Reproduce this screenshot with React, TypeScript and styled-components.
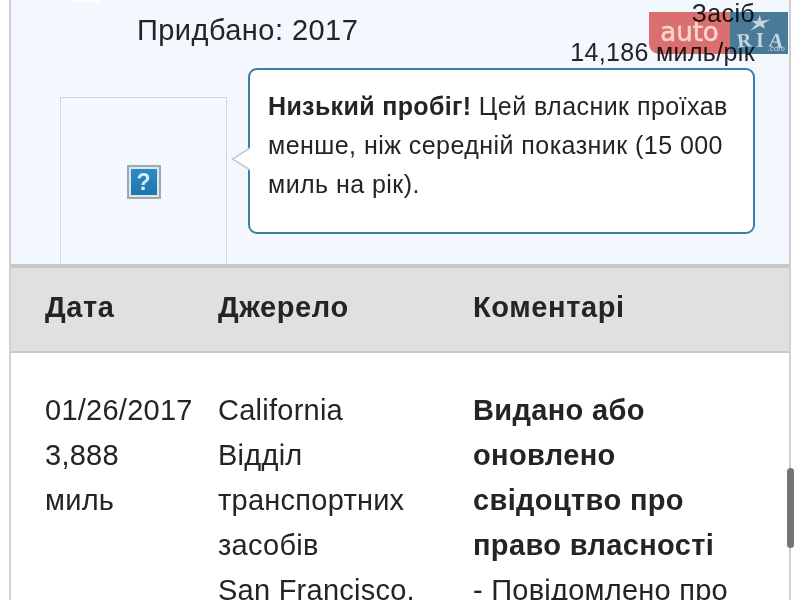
import React from 'react';
import styled, { createGlobalStyle } from 'styled-components';

const GlobalStyle = createGlobalStyle`
    html, body {
        margin: 0;
        padding: 0;
        width: 800px;
        height: 600px;
        overflow: hidden;
        background: #ffffff;
    }
    body {
        font-family: "Liberation Sans", Arial, sans-serif;
        color: #222426;
    }
`;

const Page = styled.div`
    position: relative;
    width: 800px;
    height: 600px;
    overflow: hidden;
`;

const Card = styled.div`
    margin-left: 9px;
    width: 782px;
    height: 600px;
    box-sizing: border-box;
    border-left: 2px solid #cdcfd2;
    border-right: 2px solid #cdcfd2;
`;

const TopPanel = styled.div`
    position: relative;
    height: 264px;
    box-sizing: border-box;
    background: #f3f7fe;
    display: flex;
    flex-direction: column;
    overflow: hidden;
    &::before {
        content: '';
        position: absolute;
        left: 61px;
        top: 0;
        width: 28px;
        height: 2px;
        background: #ffffff;
    }
`;

const Summary = styled.div`
    display: flex;
    justify-content: space-between;
    align-items: flex-start;
    height: 68px;
    padding: 0 34px 0 126px;
`;

const Purchased = styled.div`
    font-size: 29px;
    letter-spacing: 0.45px;
    line-height: 30px;
    margin-top: 15px;
`;

const Stats = styled.div`
    text-align: right;
    font-size: 25px;
    letter-spacing: 0.35px;
    line-height: 39px;
    margin-top: -6px;
`;

const Details = styled.div`
    display: flex;
    align-items: flex-start;
    padding-left: 49px;
`;

const Photo = styled.div`
    width: 167px;
    height: 168px;
    margin-top: 29px;
    box-sizing: border-box;
    border: 1px solid #d3d8e0;
    border-bottom: none;
    display: flex;
    align-items: center;
    justify-content: center;
`;

const MissingIcon = styled.div`
    width: 34px;
    height: 34px;
    box-sizing: border-box;
    border: 2px solid #a0a9b2;
    outline: 2px solid #dbe8f2;
    outline-offset: -4px;
    background: linear-gradient(#2f8cc4, #1f72ad);
    color: #d8edf7;
    font-size: 23px;
    font-weight: 700;
    line-height: 30px;
    text-align: center;
`;

const Bubble = styled.div`
    position: relative;
    margin-left: 21px;
    width: 507px;
    height: 166px;
    box-sizing: border-box;
    padding: 17px 18px;
    background: #ffffff;
    border: 2px solid #3d7ea6;
    border-radius: 9px;
    font-size: 25px;
    letter-spacing: 0.45px;
    line-height: 39px;
    white-space: nowrap;
`;

const BubbleTail = styled.svg`
    position: absolute;
    left: -19px;
    top: 77px;
`;

const Strong = styled.strong`
    font-weight: 700;
    letter-spacing: 0.35px;
`;

const TableHead = styled.div`
    display: grid;
    grid-template-columns: 173px 255px 1fr;
    align-items: center;
    height: 89px;
    box-sizing: border-box;
    padding: 0 0 5px 34px;
    background: #e0e0e0;
    border-top: 4px solid #c8c8c8;
    border-bottom: 2px solid #c8c8c8;
    font-size: 29px;
    letter-spacing: 0.6px;
    font-weight: 700;
`;

const TableRow = styled.div`
    display: grid;
    grid-template-columns: 173px 255px 1fr;
    padding: 35px 0 0 34px;
    font-size: 29px;
    letter-spacing: 0.25px;
    line-height: 45px;
`;

const Cell = styled.div`
    white-space: nowrap;
`;

const BoldLine = styled.div`
    font-weight: 700;
    letter-spacing: 0.35px;
`;

const Watermark = styled.div`
    position: absolute;
    left: 649px;
    top: 12px;
    display: flex;
    height: 42px;
`;

const AutoMark = styled.div`
    position: relative;
    width: 81px;
    color: #f9d5cf;
    font-family: "DejaVu Sans", sans-serif;
    font-size: 26px;
    line-height: 40px;
    text-align: center;
    -webkit-text-stroke: 0.5px #f9d5cf;
    &::before {
        content: '';
        position: absolute;
        inset: 0;
        background: #e4736e;
        border-bottom-left-radius: 10px;
        mix-blend-mode: multiply;
    }
`;

const AutoLabel = styled.span`
    position: relative;
`;

const RiaMark = styled.div`
    position: relative;
    width: 58px;
    color: #c4d6e0;
    &::before {
        content: '';
        position: absolute;
        inset: 0;
        background: #4c7f99;
        mix-blend-mode: multiply;
    }
`;

const RiaStar = styled.svg`
    position: absolute;
    left: 17px;
    top: 3px;
`;

const RiaLetters = styled.div`
    position: absolute;
    left: 7px;
    right: 5px;
    top: 18px;
    display: flex;
    justify-content: space-between;
    font-family: "Liberation Serif", serif;
    font-size: 20px;
    font-weight: 700;
    line-height: 20px;
`;

const RiaLetter = styled.span<{ $tilt: number }>`
    transform: rotate(${(p) => p.$tilt}deg);
`;

const RiaDomain = styled.span`
    position: absolute;
    right: 3px;
    bottom: 1px;
    font-size: 8px;
    font-style: italic;
    line-height: 8px;
`;

const ScrollThumb = styled.div`
    position: absolute;
    left: 787px;
    top: 468px;
    width: 7px;
    height: 80px;
    border-radius: 4px;
    background: #757575;
`;

const App: React.FC = () => {
    return (
        <Page>
            <GlobalStyle />
            <Card>
                <TopPanel>
                    <Summary>
                        <Purchased>Придбано: 2017</Purchased>
                        <Stats>
                            Засіб
                            <br />
                            14,186 миль/рік
                        </Stats>
                    </Summary>
                    <Details>
                        <Photo>
                            <MissingIcon>?</MissingIcon>
                        </Photo>
                        <Bubble>
                            <BubbleTail width="20" height="24" viewBox="0 0 20 24">
                                <polygon points="20,1 1.5,12 20,23" fill="#ffffff" />
                                <polyline points="19,1 1.5,12 19,23" fill="none" stroke="#b9cfdb" strokeWidth="1.5" />
                            </BubbleTail>
                            <Strong>Низький пробіг!</Strong> Цей власник проїхав
                            <br />
                            менше, ніж середній показник (15 000
                            <br />
                            миль на рік).
                        </Bubble>
                    </Details>
                </TopPanel>
                <TableHead>
                    <div>Дата</div>
                    <div>Джерело</div>
                    <div>Коментарі</div>
                </TableHead>
                <TableRow>
                    <Cell>
                        01/26/2017
                        <br />
                        3,888
                        <br />
                        миль
                    </Cell>
                    <Cell>
                        California
                        <br />
                        Відділ
                        <br />
                        транспортних
                        <br />
                        засобів
                        <br />
                        San Francisco,
                    </Cell>
                    <Cell>
                        <BoldLine>Видано або</BoldLine>
                        <BoldLine>оновлено</BoldLine>
                        <BoldLine>свідоцтво про</BoldLine>
                        <BoldLine>право власності</BoldLine>
                        - Повідомлено про
                    </Cell>
                </TableRow>
            </Card>
            <Watermark>
                <AutoMark>
                    <AutoLabel>auto</AutoLabel>
                </AutoMark>
                <RiaMark>
                    <RiaStar width="24" height="16" viewBox="0 0 26 18">
                        <path d="M14 0l1.5 6.5L26 5l-8 4.5 1.5 6-5.5-3.5L3 18l7-7.5L5 7l6.5-.5z" fill="#c4d6e0" />
                    </RiaStar>
                    <RiaLetters>
                        <RiaLetter $tilt={-6}>R</RiaLetter>
                        <RiaLetter $tilt={0}>I</RiaLetter>
                        <RiaLetter $tilt={6}>A</RiaLetter>
                    </RiaLetters>
                    <RiaDomain>.com</RiaDomain>
                </RiaMark>
            </Watermark>
            <ScrollThumb />
        </Page>
    );
};

export default App;
